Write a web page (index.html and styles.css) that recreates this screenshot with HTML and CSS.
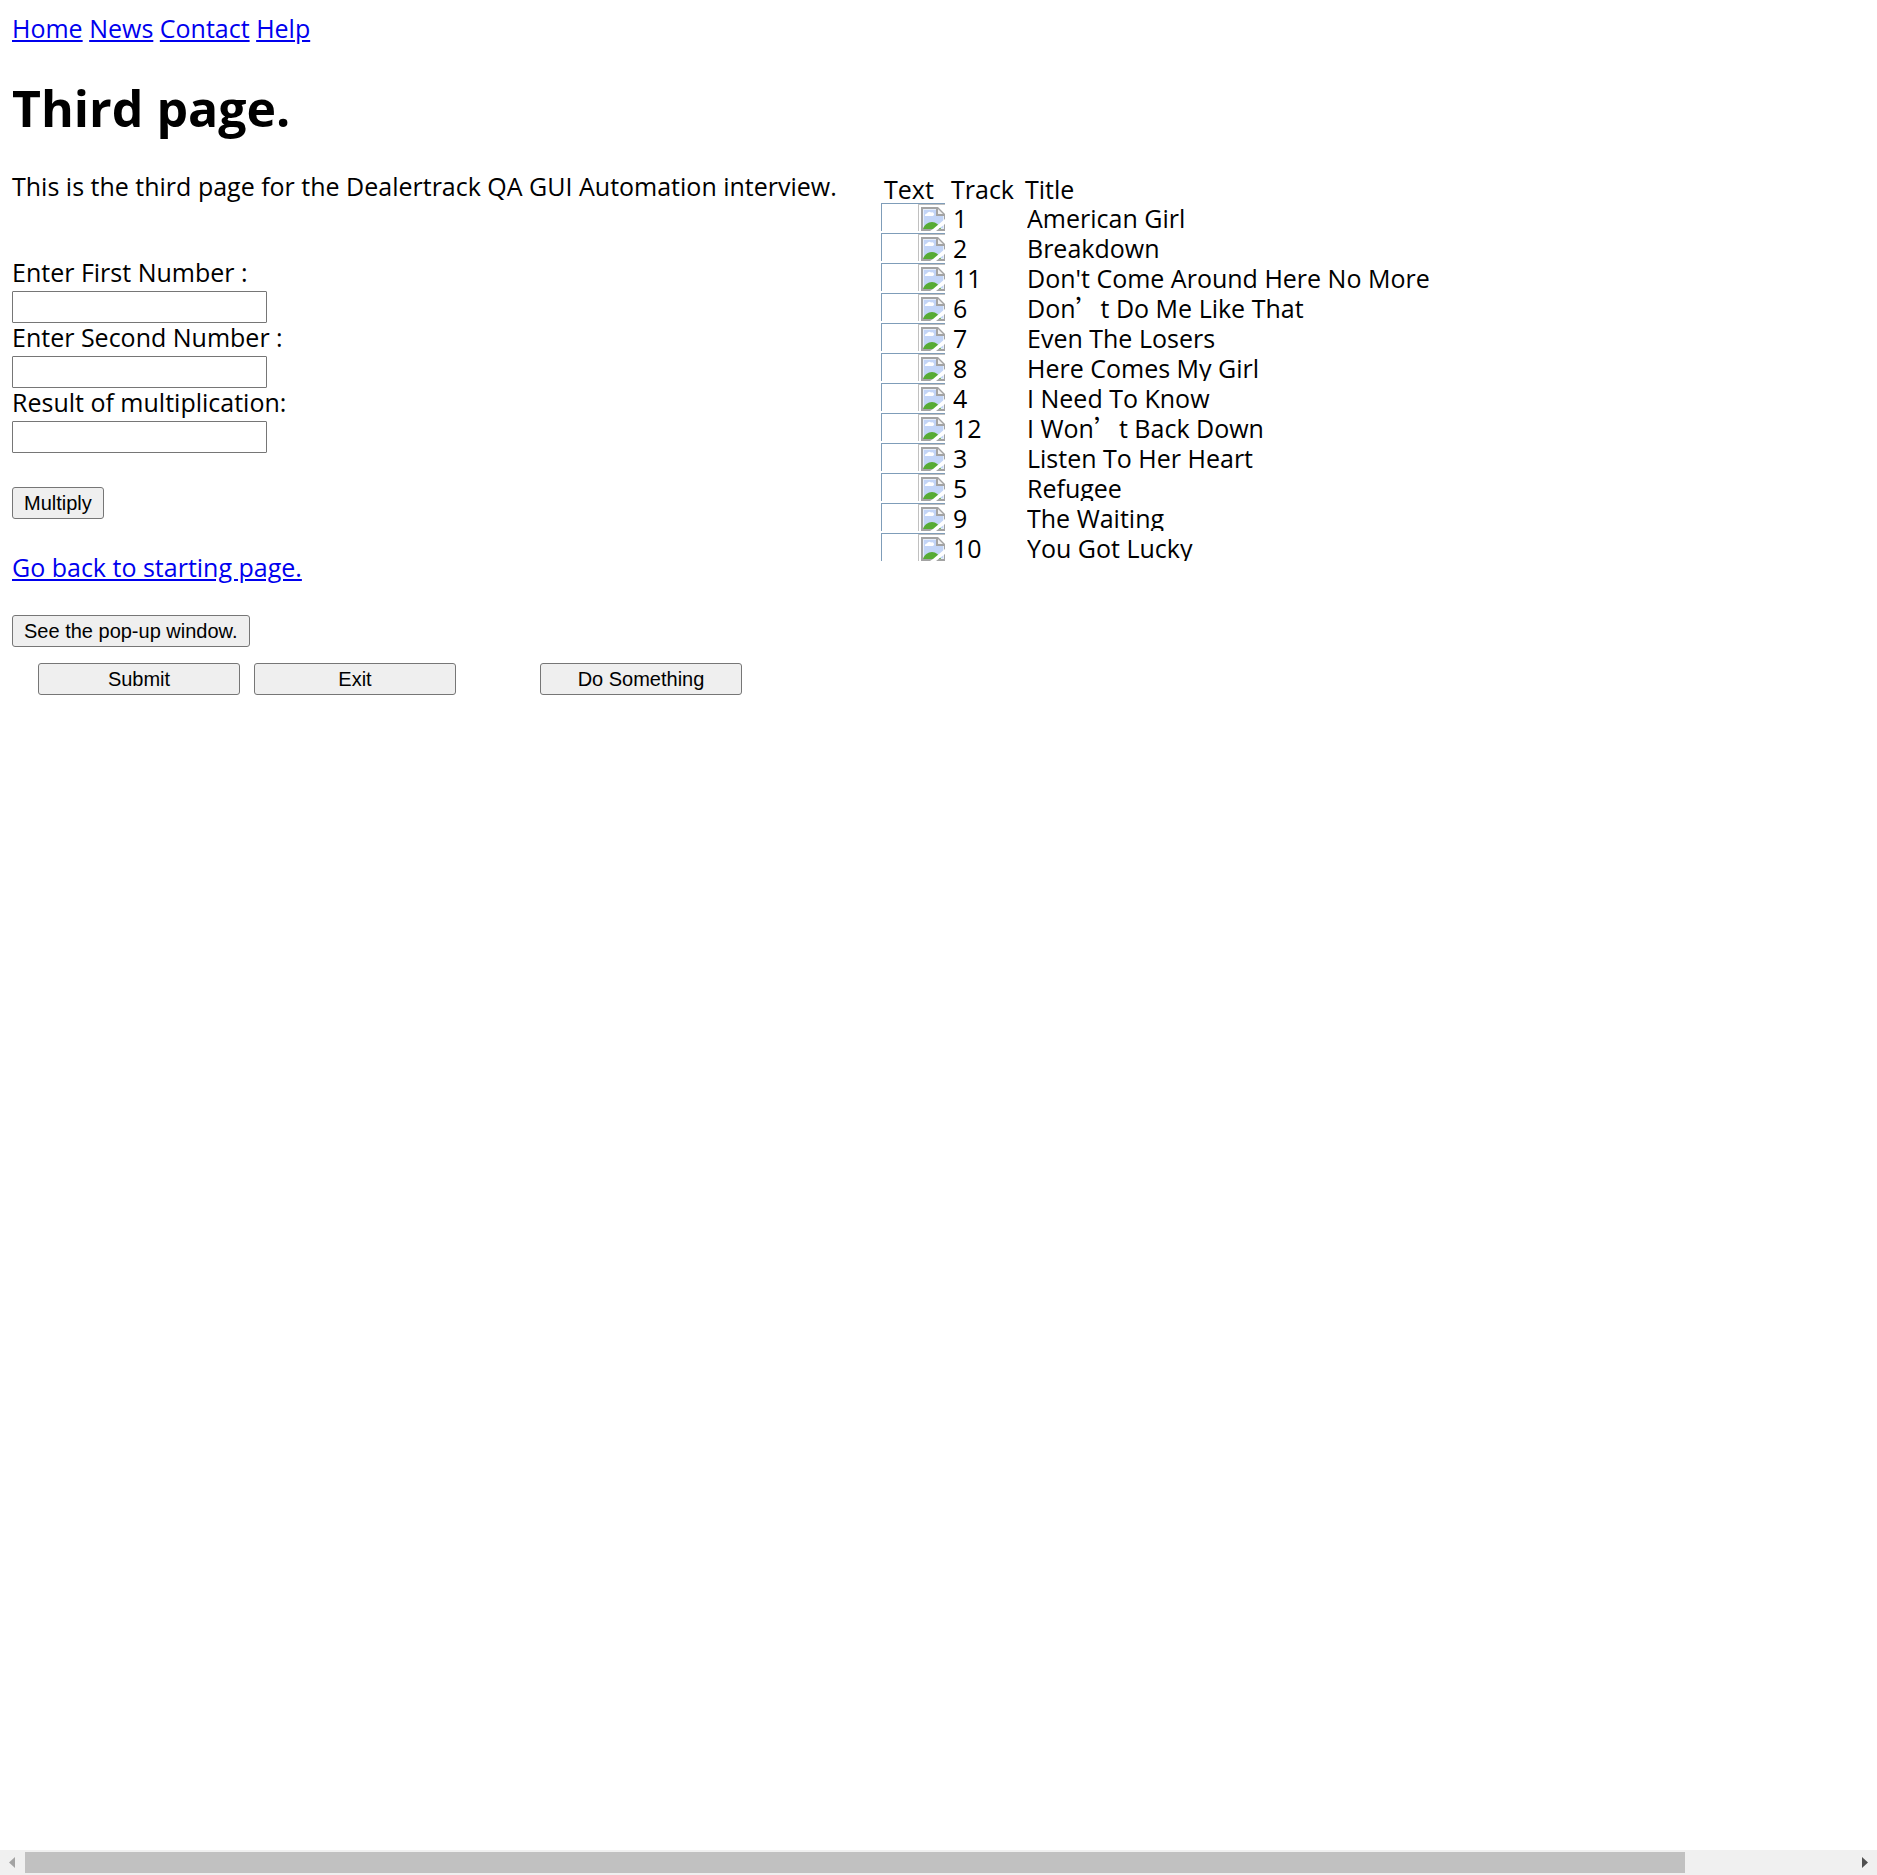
FILE: index.html
```html
<!DOCTYPE html>
<html lang="en">
<head>
<meta charset="utf-8">
<title>Third page</title>
<link rel="stylesheet" href="styles.css">
</head>
<body>
<svg class="defs" aria-hidden="true">
  <symbol id="broken" viewBox="0 0 24 24">
    <path d="M0 0H17L24 7V24H0Z" fill="#a3a3a3"/>
    <path d="M2 2H15V9H23V22H2Z" fill="#e6eefb"/>
    <path d="M3 3H15V9H22V21H3Z" fill="#c3d5f7"/>
    <path d="M4 9a2 2 0 0 1 2-2.500a2.500 2.500 0 0 1 4-1a2 2 0 0 1 2 3.500Z" fill="#fff"/>
    <path d="M2 22c1-4 5-7 9-7s7 3 9 7Z" fill="#57ab35"/>
    <path d="M24 12V17L15 24H9L12 22Z" fill="#fff"/>
    <path d="M17 2V7H22Z" fill="#f0f0f0"/>
  </symbol>
</svg>
<div class="page">
  <nav class="nav">
    <a href="#home">Home</a>
    <a href="#news">News</a>
    <a href="#contact">Contact</a>
    <a href="#help">Help</a>
  </nav>
  <h1>Third page.</h1>
  <main class="columns">
    <div class="left">
      <p class="intro">This is the third page for the Dealertrack QA GUI Automation interview.</p>
      <form class="calc">
        <label for="first">Enter First Number :</label>
        <input id="first" type="text">
        <label for="second">Enter Second Number :</label>
        <input id="second" type="text">
        <label for="result">Result of multiplication:</label>
        <input id="result" type="text">
        <button type="button" class="multiply">Multiply</button>
      </form>
      <a class="back" href="#start">Go back to starting page.</a>
      <button type="button">See the pop-up window.</button>
      <div class="actions">
        <button type="button">Submit</button>
        <button type="button">Exit</button>
        <button type="button" class="apart">Do Something</button>
      </div>
    </div>
    <table class="tracks">
      <thead>
        <tr><th class="c-text">Text</th><th class="c-track">Track</th><th>Title</th></tr>
      </thead>
      <tbody>
        <tr><td><div class="combo"><svg><use href="#broken"/></svg></div></td><td><div>1</div></td><td><div>American Girl</div></td></tr>
        <tr><td><div class="combo"><svg><use href="#broken"/></svg></div></td><td><div>2</div></td><td><div>Breakdown</div></td></tr>
        <tr><td><div class="combo"><svg><use href="#broken"/></svg></div></td><td><div>11</div></td><td><div>Don't Come Around Here No More</div></td></tr>
        <tr><td><div class="combo"><svg><use href="#broken"/></svg></div></td><td><div>6</div></td><td><div>Don<span class="wide">’</span>t Do Me Like That</div></td></tr>
        <tr><td><div class="combo"><svg><use href="#broken"/></svg></div></td><td><div>7</div></td><td><div>Even The Losers</div></td></tr>
        <tr><td><div class="combo"><svg><use href="#broken"/></svg></div></td><td><div>8</div></td><td><div>Here Comes My Girl</div></td></tr>
        <tr><td><div class="combo"><svg><use href="#broken"/></svg></div></td><td><div>4</div></td><td><div>I Need To Know</div></td></tr>
        <tr><td><div class="combo"><svg><use href="#broken"/></svg></div></td><td><div>12</div></td><td><div>I Won<span class="wide">’</span>t Back Down</div></td></tr>
        <tr><td><div class="combo"><svg><use href="#broken"/></svg></div></td><td><div>3</div></td><td><div>Listen To Her Heart</div></td></tr>
        <tr><td><div class="combo"><svg><use href="#broken"/></svg></div></td><td><div>5</div></td><td><div>Refugee</div></td></tr>
        <tr><td><div class="combo"><svg><use href="#broken"/></svg></div></td><td><div>9</div></td><td><div>The Waiting</div></td></tr>
        <tr><td><div class="combo"><svg><use href="#broken"/></svg></div></td><td><div>10</div></td><td><div>You Got Lucky</div></td></tr>
      </tbody>
    </table>
  </main>
</div>
<div class="scrollbar" aria-hidden="true">
  <svg class="arrow" viewBox="0 0 25 25"><path d="M9 12.500L15 7V18Z" fill="#a3a3a3"/></svg>
  <div class="track"><div class="thumb"></div></div>
  <svg class="arrow" viewBox="0 0 25 25"><path d="M16 12.500L10 7V18Z" fill="#505050"/></svg>
</div>
</body>
</html>
```
FILE: styles.css
```css
* {
  box-sizing: border-box;
}

body {
  margin: 0;
  min-height: 100vh;
  display: flex;
  flex-direction: column;
  background: #fff;
  color: #000;
  font-family: "Open Sans", "Noto Sans", sans-serif;
  font-size: 25px;
  line-height: 32px;
}

.defs {
  display: none;
}

.page {
  flex: 1;
  padding: 12px;
}

a {
  color: #0000ee;
  text-decoration: underline;
}

h1 {
  margin: 32px 0 30px;
  font-size: 50px;
  line-height: 64px;
}

.columns {
  display: grid;
  grid-template-columns: 869px 1fr;
  align-items: start;
}

.left {
  display: flex;
  flex-direction: column;
  align-items: flex-start;
}

.intro {
  margin: 0 0 56px;
}

.calc {
  display: flex;
  flex-direction: column;
  align-items: flex-start;
  margin-bottom: 32px;
}

label {
  margin-bottom: 4px;
  line-height: 29px;
}

input {
  width: 255px;
  height: 32px;
  padding: 2px 3px;
  border: 1px solid #767676;
  border-radius: 1px;
  background: #fff;
  font: 20px "Liberation Sans", Arial, sans-serif;
}

button {
  height: 32px;
  padding: 0 11px;
  border: 1px solid #767676;
  border-radius: 3px;
  background: #efefef;
  color: #000;
  font: 20px "Liberation Sans", Arial, sans-serif;
}

.multiply {
  margin-top: 34px;
}

.back {
  margin-bottom: 32px;
}

.actions {
  display: flex;
  gap: 14px;
  margin: 16px 0 0 26px;
}

.actions button {
  width: 202px;
}

.actions .apart {
  margin-left: 70px;
}

.tracks {
  width: 100%;
  margin-top: 5px;
  border-spacing: 0;
  table-layout: fixed;
}

.tracks th,
.tracks td {
  padding: 0 0 0 8px;
  text-align: left;
  vertical-align: top;
  font-weight: 400;
  line-height: 30px;
  white-space: nowrap;
}

.tracks th {
  padding-left: 6px;
  line-height: 28px;
}

.tracks .c-text {
  width: 64px;
  padding-left: 3px;
}

.tracks .c-track {
  width: 74px;
}

.tracks td:first-child {
  padding-left: 0;
}

.tracks td div {
  height: 28px;
  margin-bottom: 2px;
  overflow: hidden;
}

.tracks .combo {
  display: flex;
  justify-content: flex-end;
  border: solid #7f9db9;
  border-width: 1px 0 0 1px;
}

.combo svg {
  width: 27px;
  height: 27px;
  padding: 2px 0 0 2px;
  border: solid #c0c0c0;
  border-width: 1px 0 0 1px;
}

.wide {
  font-family: "Noto Sans CJK SC", sans-serif;
  line-height: 0;
}

.scrollbar {
  display: flex;
  height: 25px;
  background: #f0f0f0;
}

.arrow {
  flex: none;
  width: 25px;
  height: 25px;
}

.track {
  flex: 1;
  padding: 2px 0;
}

.thumb {
  width: calc(91% - 3px);
  height: 21px;
  background: #c1c1c1;
}
```
